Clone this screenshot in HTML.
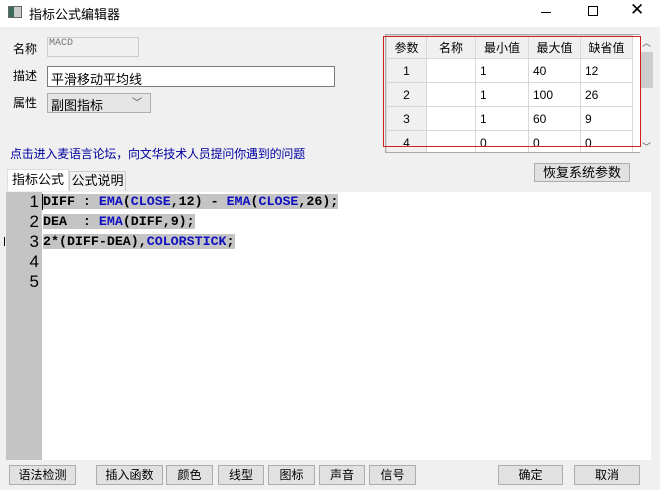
<!DOCTYPE html>
<html><head><meta charset="utf-8"><style>
*{margin:0;padding:0;box-sizing:border-box}
body{width:660px;height:490px;background:#f0f0f0;font-family:"Liberation Sans","Noto Sans CJK SC",sans-serif;font-size:12px;color:#000;position:relative;overflow:hidden}
.a{position:absolute}
.title{left:0;top:0;width:660px;height:27px;background:#fff}
.btn{position:absolute;height:20px;top:465px;background:#e1e1e1;border:1px solid #adadad;text-align:center;line-height:18px;font-size:12px}
table{border-collapse:collapse;font-size:12px}
td{border:1px solid #d8d8d8;height:24px;padding-left:4px;background:#fff}
td.h{background:#f0f0f0;text-align:center;padding:0}
tr.hd td{background:#f0f0f0;text-align:center;padding:0;height:23px}
.code{font-family:"Liberation Mono",monospace;font-weight:bold;font-size:13.3px;line-height:20px;white-space:pre;color:#000}
.k{color:#1010c0}
.sel{background:#c4c4c4}
.ln{font-size:17px;line-height:20px;text-align:right;width:32px;font-family:"Liberation Sans",sans-serif}
</style></head><body>
<div class="a title"></div>
<div class="a" style="left:8px;top:6px;width:14px;height:12px;border:1px solid #666;background:linear-gradient(90deg,#3b6b5a 0 5px,#ccc 5px)"></div>
<div class="a" style="left:29px;top:4px;font-size:13px">指标公式编辑器</div>
<div class="a" style="left:541px;top:12px;width:10px;height:1px;background:#000"></div>
<div class="a" style="left:588px;top:6px;width:10px;height:10px;border:1px solid #000"></div>
<div class="a" style="left:630px;top:0px;font-size:17px;font-weight:300">✕</div>

<div class="a" style="left:13px;top:40px">名称</div>
<div class="a" style="left:47px;top:37px;width:92px;height:20px;border:1px solid #ccc;background:#f0f0f0;font-family:'Liberation Mono',monospace;font-size:10px;color:#777;padding-left:1px">MACD</div>
<div class="a" style="left:13px;top:67px">描述</div>
<div class="a" style="left:47px;top:66px;width:288px;height:21px;border:1px solid #7a7a7a;background:#fff;padding:2px 3px;font-size:13px">平滑移动平均线</div>
<div class="a" style="left:13px;top:94px">属性</div>
<div class="a" style="left:47px;top:93px;width:104px;height:20px;border:1px solid #adadad;background:#e5e5e5;padding:1px 3px;font-size:13px">副图指标<span style="position:absolute;right:8px;top:0;font-size:10px;color:#444">﹀</span></div>
<div class="a" style="left:10px;top:145px;color:#0000a0;font-size:12px;letter-spacing:-0.2px">点击进入麦语言论坛，向文华技术人员提问你遇到的问题</div>

<div class="a" style="left:385px;top:34px;width:256px;height:119px;border:1px solid #aaa;overflow:hidden;background:#fff">
<table style="width:247px">
<tr class="hd"><td style="width:40px">参数</td><td style="width:49px">名称</td><td style="width:53px">最小值</td><td style="width:52px">最大值</td><td>缺省值</td></tr>
<tr><td class="h">1</td><td></td><td>1</td><td>40</td><td>12</td></tr>
<tr><td class="h">2</td><td></td><td>1</td><td>100</td><td>26</td></tr>
<tr><td class="h">3</td><td></td><td>1</td><td>60</td><td>9</td></tr>
<tr><td class="h">4</td><td></td><td>0</td><td>0</td><td>0</td></tr>
</table></div>
<div class="a" style="left:640px;top:34px;width:14px;height:119px;background:#f0f0f0"></div>
<div class="a" style="left:641px;top:52px;width:12px;height:36px;background:#cdcdcd"></div>
<div class="a" style="left:642px;top:36px;font-size:9px;color:#555">︿</div>
<div class="a" style="left:642px;top:140px;font-size:9px;color:#555">﹀</div>
<div class="a" style="left:383px;top:36px;width:258px;height:111px;border:1px solid #d02020"></div>

<div class="btn" style="left:534px;top:163px;width:96px;height:19px;font-size:13px">恢复系统参数</div>

<div class="a" style="left:7px;top:169px;width:62px;height:22px;background:#fff;border:1px solid #ddd;border-bottom:none;text-align:center;line-height:20px;font-size:13px">指标公式</div>
<div class="a" style="left:69px;top:171px;width:57px;height:20px;border:1px solid #ccc;border-bottom:none;text-align:center;line-height:18px;font-size:13px">公式说明</div>

<div class="a" style="left:6px;top:192px;width:645px;height:268px;background:#fff"></div>
<div class="a" style="left:6px;top:192px;width:36px;height:268px;background:#c4c4c4"></div>
<div class="a ln" style="left:7px;top:192px">1<br>2<br>3<br>4<br>5</div>
<div class="a" style="left:42px;top:194px;width:1px;height:16px;background:#000"></div>
<div class="a code" style="left:43px;top:192px"><span class="sel">DIFF : <span class="k">EMA</span>(<span class="k">CLOSE</span>,12) - <span class="k">EMA</span>(<span class="k">CLOSE</span>,26);</span>
<span class="sel">DEA  : <span class="k">EMA</span>(DIFF,9);</span>
<span class="sel">2*(DIFF-DEA),<span class="k">COLORSTICK</span>;</span></div>
<div class="a" style="left:4px;top:237px;width:1px;height:9px;background:#000"></div>

<div class="btn" style="left:9px;width:67px">语法检测</div>
<div class="btn" style="left:96px;width:67px">插入函数</div>
<div class="btn" style="left:166px;width:47px">颜色</div>
<div class="btn" style="left:218px;width:46px">线型</div>
<div class="btn" style="left:268px;width:47px">图标</div>
<div class="btn" style="left:319px;width:46px">声音</div>
<div class="btn" style="left:369px;width:47px">信号</div>
<div class="btn" style="left:498px;width:65px">确定</div>
<div class="btn" style="left:574px;width:66px">取消</div>
</body></html>
